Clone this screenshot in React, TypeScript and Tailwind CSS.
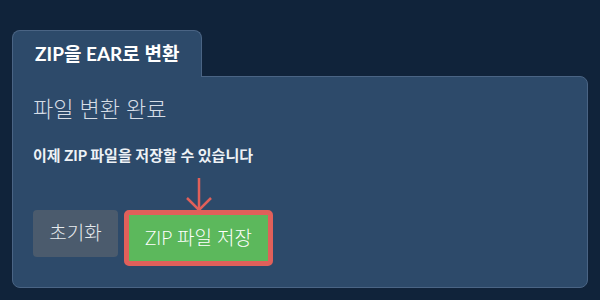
const font = "font-['Lato','Noto_Sans_CJK_KR',sans-serif]";

function DownArrow() {
  return (
    <svg width="30" height="36" viewBox="0 0 30 36" fill="none" className="absolute left-1/2 -translate-x-1/2 -top-[38px]">
      <path d="M15 1 V33" stroke="#e0605a" strokeWidth="2.5" />
      <path d="M3 21 L15 33 L27 21" stroke="#e0605a" strokeWidth="2.5" />
    </svg>
  );
}

export default function App() {
  return (
    <div className={`${font} w-[600px] h-[300px] bg-[#10233a] pt-[30px] px-3`}>
      <div className="relative z-10 -mb-px w-[190px] h-[47px] bg-[#2d4a6a] border border-b-0 border-[#4a6484] rounded-t-lg flex items-center pl-[22px]">
        <span className="text-[19px] font-bold text-white">ZIP을 EAR로 변환</span>
      </div>
      <div className="h-[212px] bg-[#2d4a6a] border border-[#4a6484] rounded-b-lg rounded-tr-lg px-5 pt-[18px]">
        <h2 className="text-[22px] font-light leading-7 text-[#d6dde6]">파일 변환 완료</h2>
        <p className="mt-[22px] text-[15px] font-bold leading-5 text-[#eef2f6]">
          이제 ZIP 파일을 저장할 수 있습니다
        </p>
        <div className="mt-[45px] flex items-start gap-1.5">
          <button type="button" className="h-[47px] w-[85px] rounded bg-[#4b5b6d] text-[19px] font-light text-[#e6eaee]">
            초기화
          </button>
          <div className="relative rounded-[5px] border-[5px] border-[#e0605a]">
            <DownArrow />
            <button type="button" className="h-[46px] w-[139px] bg-[#5cb85c] text-[19px] font-light text-white">
              ZIP 파일 저장
            </button>
          </div>
        </div>
      </div>
    </div>
  );
}
